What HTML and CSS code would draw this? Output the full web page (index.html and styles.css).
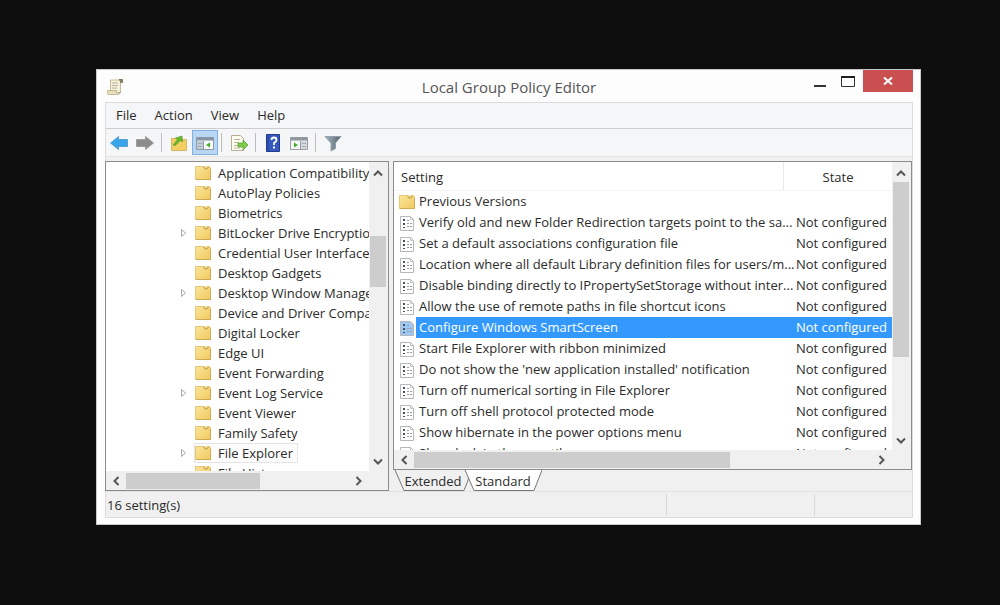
FILE: index.html
```html
<!DOCTYPE html>
<html lang="en">
<head>
<meta charset="utf-8">
<title>Local Group Policy Editor</title>
<link rel="stylesheet" href="styles.css">
</head>
<body>
<svg class="defs" aria-hidden="true">
  <defs>
    <linearGradient id="gold" x1="0" y1="0" x2="1" y2="1"><stop offset="0" stop-color="#fbe59b"/><stop offset="1" stop-color="#f0c95f"/></linearGradient>
    <linearGradient id="steel" x1="0" x2="1"><stop offset="0" stop-color="#9db0c0"/><stop offset=".4" stop-color="#8796a3"/><stop offset="1" stop-color="#55626e"/></linearGradient>
    <symbol id="folder" viewBox="0 0 16 16"><path d="M.5 1.500h9l1 1.500 1-1.500h3l1 1.500v11.500H.5z" fill="url(#gold)" stroke="#e6c877"/><path d="M8.500 2l1.500 2h2l1.500-2" fill="none" stroke="#b99a4d"/><path d="M1 14.500h14.500V4" fill="none" stroke="#cfa955"/></symbol>
    <symbol id="policy" viewBox="0 0 16 16"><path class="sheet" d="M1.500 1.500h10l3 3v11h-13z" stroke="#b4b7bc"/><path d="M11.500 1.500v3h3" fill="none" stroke="#c2c5ca"/><path d="M4 4h2v2H4zM4 8h2v2H4zM4 12h2v1H4z" fill="#4b4f58"/><path d="M8 5.500h2M8 8.500h2M8 11.500h2M11 8.500h2M11 11.500h2" stroke="#979ba4"/></symbol>
    <symbol id="expand" viewBox="0 0 8 10"><path d="M1.500 1.500v7l4-3.500z" fill="#fff" stroke="#a8a8a8"/></symbol>
    <symbol id="up" viewBox="0 0 10 8"><path d="M1 6.500l4-4 4 4" fill="none" stroke="#555" stroke-width="2"/></symbol>
    <symbol id="down" viewBox="0 0 10 8"><path d="M1 1.500l4 4 4-4" fill="none" stroke="#555" stroke-width="2"/></symbol>
    <symbol id="left" viewBox="0 0 8 10"><path d="M6.500 1l-4 4 4 4" fill="none" stroke="#555" stroke-width="2"/></symbol>
    <symbol id="right" viewBox="0 0 8 10"><path d="M1.500 1l4 4-4 4" fill="none" stroke="#555" stroke-width="2"/></symbol>
  </defs>
</svg>
<main class="window">
  <header class="titlebar">
    <svg class="app-icon" viewBox="0 0 18 18" aria-hidden="true"><path d="M4.500 2h10v12.500H4.500z" fill="#f4efd9" stroke="#c6bd9e"/><path d="M13 1.500h3.500v3H14.500" fill="#8a7f62" stroke="#80765c"/><path d="M1.500 12.500h9v3q0 1-1 1h-7q-1 0-1-1z" fill="#e8dfbd" stroke="#c2b78f"/><path d="M11 16.500q3 0 3.500-3" fill="none" stroke="#a0946c"/><path d="M6 5h6M6 7.500h6M6 10h5" stroke="#b5b3a5"/></svg>
    <h1 class="title">Local Group Policy Editor</h1>
    <div class="controls">
      <button class="control" aria-label="Minimize"><svg class="glyph" viewBox="0 0 16 16"><path d="M2 13h12" stroke="#333" stroke-width="2"/></svg></button>
      <button class="control" aria-label="Maximize"><svg class="glyph" viewBox="0 0 16 16"><path d="M1.500 3.500h13v10h-13z" fill="#fff" stroke="#333"/><path d="M1 4h14" stroke="#222" stroke-width="2"/></svg></button>
      <button class="control close" aria-label="Close"><svg class="glyph" viewBox="0 0 16 16"><path d="M4 4.500l8 7M12 4.500l-8 7" stroke="#fff" stroke-width="2"/></svg></button>
    </div>
  </header>
  <div class="client">
    <nav class="menu" aria-label="Menu">
      <button class="menu-item">File</button><button class="menu-item">Action</button><button class="menu-item">View</button><button class="menu-item">Help</button>
    </nav>
    <div class="toolbar" role="toolbar" aria-label="Tools">
      <button class="tool" aria-label="Back"><svg class="tool-icon" viewBox="0 0 20 18"><path d="M1.500 9l8-6.500V5.500h9v7h-9v3z" fill="#38a5ea" stroke="#5a9fce"/></svg></button>
      <button class="tool" aria-label="Forward"><svg class="tool-icon" viewBox="0 0 20 18"><path d="M18.500 9l-8-6.500V5.500h-9v7h9v3z" fill="#8b8b8b" stroke="#9e9e9e"/></svg></button>
      <span class="divider"></span>
      <button class="tool" aria-label="Up one level"><svg class="tool-icon" viewBox="0 0 20 18"><path d="M2.500 4.500h8l1 1h6v11h-15z" fill="#f3cf62" stroke="#d4b768"/><path d="M4 11q2-2 4.500-5.500L6.500 4l6.500-2 .5 6-2-1.500Q8 10 6 11.500z" fill="#67b82e" stroke="#4c9425" stroke-width=".6"/></svg></button>
      <button class="tool pressed" aria-label="Show or hide console tree" aria-pressed="true"><svg class="tool-icon" viewBox="0 0 20 18"><path d="M1.500 3.500h17v12h-17z" fill="#f5f7f9" stroke="#8d98a5"/><path d="M2 5h16" stroke="#8593a3" stroke-width="3"/><path d="M2 7h6v8H2z" fill="#c3cdd8"/><path d="M8.500 7v8" stroke="#8d98a5"/><path d="M3 9.500h4M3 12.500h4" stroke="#9caab8"/><path d="M15 8.500v5l-4-2.500z" fill="#46ad27"/></svg></button>
      <span class="divider"></span>
      <button class="tool" aria-label="Export list"><svg class="tool-icon" viewBox="0 0 20 18"><path d="M2.500 1.500h9l3 3v12h-12z" fill="#fffef2" stroke="#b8ae91"/><path d="M5 5.500h6M5 8.500h5M5 11.500h4M5 14h6" stroke="#b8b49f"/><path d="M9 9h5V6l5 5-5 5v-3H9z" fill="#80cb4b" stroke="#4da12b" stroke-width=".7"/></svg></button>
      <span class="divider"></span>
      <button class="tool" aria-label="Help"><svg class="tool-icon" viewBox="0 0 20 18"><path d="M3.500 .5h13v17h-13z" fill="#3559bd" stroke="#213c8e"/><path d="M5 1v16" stroke="#213f9b"/><path d="M8.500 6q0-2.500 2.500-2.500t2.500 2.500q0 1.500-2.500 3v2" fill="none" stroke="#fff" stroke-width="1.800"/><path d="M10 12.500h2v2h-2z" fill="#fff"/></svg></button>
      <button class="tool" aria-label="Show or hide action pane"><svg class="tool-icon" viewBox="0 0 20 18"><path d="M1.500 3.500h17v12h-17z" fill="#f5f7f9" stroke="#9a9ea3"/><path d="M2 5h16" stroke="#8f969e" stroke-width="3"/><path d="M12 7h6v8h-6z" fill="#d6dade"/><path d="M11.500 7v8" stroke="#9a9ea3"/><path d="M13 9.500h4M13 12.500h4" stroke="#9caab8"/><path d="M5 8.500v5l4-2.500z" fill="#46ad27"/></svg></button>
      <span class="divider"></span>
      <button class="tool" aria-label="Filter"><svg class="tool-icon" viewBox="0 0 20 18"><path d="M2 2.500h16l-5.500 6.500v5.500L8 17V9z" fill="url(#steel)" stroke="#8a96a0" stroke-width=".8"/></svg></button>
    </div>
    <div class="panes">
      <section class="tree-pane" aria-label="Console tree">
        <div class="tree-view">
          <ul class="tree">
            <li class="node"><span class="twisty"></span><svg class="icon"><use href="#folder"/></svg><span class="label">Application Compatibility</span></li>
            <li class="node"><span class="twisty"></span><svg class="icon"><use href="#folder"/></svg><span class="label">AutoPlay Policies</span></li>
            <li class="node"><span class="twisty"></span><svg class="icon"><use href="#folder"/></svg><span class="label">Biometrics</span></li>
            <li class="node"><svg class="twisty"><use href="#expand"/></svg><svg class="icon"><use href="#folder"/></svg><span class="label">BitLocker Drive Encryption</span></li>
            <li class="node"><span class="twisty"></span><svg class="icon"><use href="#folder"/></svg><span class="label">Credential User Interface</span></li>
            <li class="node"><span class="twisty"></span><svg class="icon"><use href="#folder"/></svg><span class="label">Desktop Gadgets</span></li>
            <li class="node"><svg class="twisty"><use href="#expand"/></svg><svg class="icon"><use href="#folder"/></svg><span class="label">Desktop Window Manager</span></li>
            <li class="node"><span class="twisty"></span><svg class="icon"><use href="#folder"/></svg><span class="label">Device and Driver Compatibility</span></li>
            <li class="node"><span class="twisty"></span><svg class="icon"><use href="#folder"/></svg><span class="label">Digital Locker</span></li>
            <li class="node"><span class="twisty"></span><svg class="icon"><use href="#folder"/></svg><span class="label">Edge UI</span></li>
            <li class="node"><span class="twisty"></span><svg class="icon"><use href="#folder"/></svg><span class="label">Event Forwarding</span></li>
            <li class="node"><svg class="twisty"><use href="#expand"/></svg><svg class="icon"><use href="#folder"/></svg><span class="label">Event Log Service</span></li>
            <li class="node"><span class="twisty"></span><svg class="icon"><use href="#folder"/></svg><span class="label">Event Viewer</span></li>
            <li class="node"><span class="twisty"></span><svg class="icon"><use href="#folder"/></svg><span class="label">Family Safety</span></li>
            <li class="node"><svg class="twisty"><use href="#expand"/></svg><span class="current"><svg class="icon"><use href="#folder"/></svg><span class="label">File Explorer</span></span></li>
            <li class="node"><span class="twisty"></span><svg class="icon"><use href="#folder"/></svg><span class="label">File History</span></li>
          </ul>
          <div class="vscroll"><svg class="chev-v"><use href="#up"/></svg><div class="vtrack"><div class="vthumb tree-vthumb"></div></div><svg class="chev-v"><use href="#down"/></svg></div>
        </div>
        <div class="hscroll"><svg class="chev-h"><use href="#left"/></svg><div class="htrack"><div class="hthumb tree-hthumb"></div></div><svg class="chev-h"><use href="#right"/></svg></div>
      </section>
      <section class="detail-pane" aria-label="Settings">
        <div class="list-frame">
          <div class="list-view">
            <div class="list-clip">
            <table class="list">
              <thead><tr><th class="col-setting">Setting</th><th class="col-state">State</th></tr></thead>
              <tbody>
                <tr><td><div class="cell"><svg class="icon"><use href="#folder"/></svg><span class="name">Previous Versions</span></div></td><td class="state"></td></tr>
                <tr><td><div class="cell"><svg class="icon"><use href="#policy"/></svg><span class="name">Verify old and new Folder Redirection targets point to the sa...</span></div></td><td class="state">Not configured</td></tr>
                <tr><td><div class="cell"><svg class="icon"><use href="#policy"/></svg><span class="name">Set a default associations configuration file</span></div></td><td class="state">Not configured</td></tr>
                <tr><td><div class="cell"><svg class="icon"><use href="#policy"/></svg><span class="name">Location where all default Library definition files for users/m...</span></div></td><td class="state">Not configured</td></tr>
                <tr><td><div class="cell"><svg class="icon"><use href="#policy"/></svg><span class="name">Disable binding directly to IPropertySetStorage without inter...</span></div></td><td class="state">Not configured</td></tr>
                <tr><td><div class="cell"><svg class="icon"><use href="#policy"/></svg><span class="name">Allow the use of remote paths in file shortcut icons</span></div></td><td class="state">Not configured</td></tr>
                <tr class="selected"><td><div class="cell"><svg class="icon"><use href="#policy"/></svg><span class="name">Configure Windows SmartScreen</span></div></td><td class="state">Not configured</td></tr>
                <tr><td><div class="cell"><svg class="icon"><use href="#policy"/></svg><span class="name">Start File Explorer with ribbon minimized</span></div></td><td class="state">Not configured</td></tr>
                <tr><td><div class="cell"><svg class="icon"><use href="#policy"/></svg><span class="name">Do not show the 'new application installed' notification</span></div></td><td class="state">Not configured</td></tr>
                <tr><td><div class="cell"><svg class="icon"><use href="#policy"/></svg><span class="name">Turn off numerical sorting in File Explorer</span></div></td><td class="state">Not configured</td></tr>
                <tr><td><div class="cell"><svg class="icon"><use href="#policy"/></svg><span class="name">Turn off shell protocol protected mode</span></div></td><td class="state">Not configured</td></tr>
                <tr><td><div class="cell"><svg class="icon"><use href="#policy"/></svg><span class="name">Show hibernate in the power options menu</span></div></td><td class="state">Not configured</td></tr>
                <tr><td><div class="cell"><svg class="icon"><use href="#policy"/></svg><span class="name">Show lock in the user tile menu</span></div></td><td class="state">Not configured</td></tr>
              </tbody>
            </table>
            </div>
            <div class="vscroll"><svg class="chev-v"><use href="#up"/></svg><div class="vtrack"><div class="vthumb list-vthumb"></div></div><svg class="chev-v"><use href="#down"/></svg></div>
          </div>
          <div class="hscroll"><svg class="chev-h"><use href="#left"/></svg><div class="htrack"><div class="hthumb list-hthumb"></div></div><svg class="chev-h"><use href="#right"/></svg></div>
        </div>
        <div class="tabs" role="tablist">
          <button class="tab" role="tab"><svg class="tab-shape" viewBox="0 0 78 21" preserveAspectRatio="none"><path d="M1 0l9 20.500h60L78 0" fill="#f0f0f0" stroke="#777"/></svg><span class="tab-text">Extended</span></button>
          <button class="tab active" role="tab" aria-selected="true"><svg class="tab-shape" viewBox="0 0 78 21" preserveAspectRatio="none"><path d="M1 0l9 20.500h60L78 0" fill="#fff" stroke="#777"/></svg><span class="tab-text">Standard</span></button>
        </div>
      </section>
    </div>
    <footer class="status"><span class="status-text">16 setting(s)</span><span class="status-cell wide"></span><span class="status-cell"></span></footer>
  </div>
</main>
</body>
</html>
```
FILE: styles.css
```css
* { box-sizing: border-box; }
body {
  margin: 0;
  padding: 69px 79px 80px 96px;
  background: #0e0e0e;
  color: #2b2b2b;
  font: 13px/20px "Open Sans", "Noto Sans", sans-serif;
}
button { border: 0; padding: 0; background: none; color: inherit; font: inherit; }
.defs { position: absolute; width: 0; height: 0; }
.window { background: #fdfdfd; border: 1px solid #c9c9c9; padding: 0 7px 6px 8px; }

.titlebar { display: grid; grid-template-columns: 1fr auto 1fr; height: 32px; align-items: start; }
.app-icon { width: 18px; height: 18px; margin: 8px 0 0 1px; }
.title { margin: 7px 0 0; font-size: 15px; font-weight: 400; color: #555; }
.controls { display: flex; justify-content: flex-end; }
.control { width: 28px; height: 22px; display: grid; place-items: center; }
.close { width: 50px; margin-left: 1px; background: #c94f50; }
.glyph { width: 16px; height: 16px; }

.client { border: 1px solid #dcdcdc; background: #f0f0f0; }
.menu { display: flex; gap: 18px; height: 26px; padding: 0 0 2px 10px; align-items: center; background: #f5f6f7; border-bottom: 1px solid #ccc; }
.toolbar { display: flex; align-items: center; height: 28px; background: #f5f6f7; border-bottom: 1px solid #e4e4e4; }
.tool { width: 26px; height: 25px; display: grid; place-items: center; }
.tool-icon { width: 20px; height: 18px; }
.pressed { background: #b9d7f5; border: 1px solid #7fb0e4; }
.divider { width: 1px; height: 19px; margin: 0 4px 0 3px; background: #bdbdbd; }

.panes { display: flex; gap: 4px; margin: 4px 0 0 -1px; }
.tree-pane { width: 284px; flex: none; background: #f0f0f0; border: 1px solid #8c8c8c; }
.tree-view { display: flex; height: 309px; padding-right: 2px; overflow: hidden; background: linear-gradient(#fff, #fff) content-box; }
.tree { flex: 1; min-width: 0; margin: 0; padding: 1px 0 0 74px; list-style: none; overflow: hidden; }
.node { display: flex; align-items: center; height: 20px; }
.twisty { width: 8px; height: 10px; margin-right: 7px; flex: none; }
.icon { width: 16px; height: 16px; flex: none; }
.label { padding: 0 4px 0 7px; white-space: nowrap; line-height: 18px; }
.current { display: flex; align-items: center; outline: 1px solid #e4e4e4; background: #fcfcfc; }

.vscroll { width: 17px; flex: none; display: flex; flex-direction: column; align-items: center; padding: 7px 0 5px; background: #f0f0f0; }
.chev-v { width: 10px; height: 8px; flex: none; }
.vtrack { flex: 1; width: 16px; padding-top: 5px; }
.vthumb { background: #cdcdcd; }
.tree-vthumb { height: 51px; margin-top: 54px; }
.list-vthumb { height: 175px; }
.hscroll { display: flex; align-items: center; height: 19px; background: #f0f0f0; padding: 0 25px 0 6px; }
.chev-h { width: 8px; height: 10px; flex: none; }
.htrack { flex: 1; margin: 0 6px; }
.hthumb { height: 16px; background: #cdcdcd; }
.tree-hthumb { width: 60%; }
.list-hthumb { width: 69%; }

.detail-pane { flex: 1; min-width: 0; }
.list-frame { border: 1px solid #8c8c8c; }
.list-view { display: flex; height: 288px; padding-right: 2px; overflow: hidden; background: linear-gradient(#fff, #fff) content-box #f0f0f0; }
.list-clip { flex: 1; min-width: 0; overflow: hidden; }
.list { width: 100%; border-spacing: 0; table-layout: fixed; line-height: 21px; }
.list th { height: 29px; padding: 2px 7px 0; font-weight: 400; text-align: left; border-bottom: 1px solid #f4f4f4; }
.list .col-state { width: 109px; text-align: center; border-left: 1px solid #e8e8e8; }
.list td { height: 21px; padding: 0; white-space: nowrap; }
.cell { display: flex; align-items: center; height: 21px; padding-left: 5px; }
.name { flex: 1; min-width: 0; padding-left: 3px; margin-left: 1px; }
.list .state { padding-left: 13px; }
.sheet { fill: var(--sheet, #fff); }
.selected { color: #fff; --sheet: #9cc8f5; }
.selected .name, .selected .state { background: #3399ff; }

.tabs { display: flex; height: 21px; padding-left: 1px; }
.tab { position: relative; width: 78px; height: 21px; }
.active { margin-left: -8px; }
.tab-shape { position: absolute; inset: 0; width: 100%; height: 100%; }
.tab-text { position: relative; }

.status { display: flex; height: 26px; align-items: center; border-top: 1px solid #e2e2e2; }
.status-text { flex: 1; padding-left: 1px; }
.status-cell { width: 98px; height: 22px; border-left: 1px solid #d8d8d8; }
.wide { width: 148px; }
```
